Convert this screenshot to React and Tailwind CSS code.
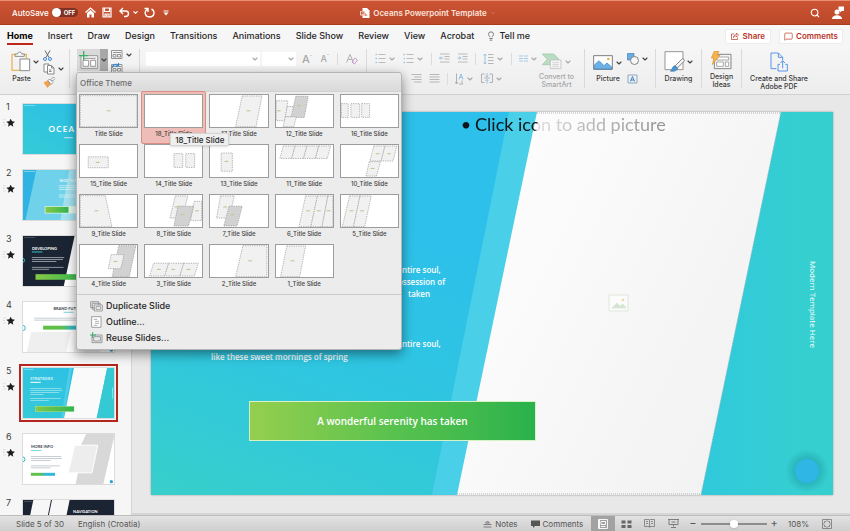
import React from 'react';
import { ChevronDown, Search, Lightbulb, MessageSquare } from 'lucide-react';

const TABS = ['Home', 'Insert', 'Draw', 'Design', 'Transitions', 'Animations', 'Slide Show', 'Review', 'View', 'Acrobat'];

// each shape is [points, fill]
const LIGHT = '#f1f1f1';
const DARK = '#d2d2d2';

const LAYOUTS = [
  { name: 'Title Slide', shapes: [['1,2 173,2 173,99 1,99', LIGHT]], marks: [[87, 50]] },
  { name: '18_Title Slide', shapes: [], marks: [], selected: true },
  { name: '17_Title Slide', shapes: [['98,3 158,3 140,99 78,99', LIGHT]], marks: [[117, 50]] },
  {
    name: '12_Title Slide',
    shapes: [['1,18 36,18 28,80 1,80', LIGHT], ['34,36 58,36 50,68 28,68', LIGHT], ['60,4 98,4 86,70 46,70', DARK], ['28,68 62,68 54,99 22,99', LIGHT]],
    marks: [[8, 50], [70, 34]],
  },
  { name: '16_Title Slide', shapes: [['1,27 22,27 22,70 1,70', LIGHT], ['30,27 57,27 57,70 30,70', LIGHT], ['63,27 87,27 87,70 63,70', LIGHT]], marks: [] },
  { name: '15_Title Slide', shapes: [['25,37 86,37 86,71 25,71', LIGHT]], marks: [[54, 55]] },
  { name: '14_Title Slide', shapes: [['88,27 115,27 115,70 88,70', LIGHT], ['124,27 151,27 151,70 124,70', LIGHT]], marks: [] },
  { name: '13_Title Slide', shapes: [['34,25 68,25 68,82 34,82', LIGHT]], marks: [[50, 52]] },
  {
    name: '11_Title Slide',
    shapes: [['22,3 58,3 48,42 12,42', LIGHT], ['58,3 94,3 84,42 48,42', LIGHT], ['94,3 130,3 120,42 84,42', LIGHT], ['130,3 166,3 156,42 120,42', LIGHT]],
    marks: [],
  },
  {
    name: '10_Title Slide',
    shapes: [['100,3 134,3 122,50 88,50', LIGHT], ['134,3 170,3 158,50 122,50', LIGHT], ['86,52 120,52 108,97 76,97', LIGHT]],
    marks: [[112, 28], [146, 28], [96, 74]],
  },
  { name: '9_Title Slide', shapes: [['1,2 77,2 97,99 1,99', LIGHT]], marks: [[50, 50]] },
  {
    name: '8_Title Slide',
    shapes: [['92,3 130,3 114,72 76,72', LIGHT], ['150,20 172,20 172,80 138,80', LIGHT], ['100,35 148,35 132,97 88,97', DARK]],
    marks: [[96, 38], [158, 50], [114, 62]],
  },
  {
    name: '7_Title Slide',
    shapes: [['32,3 74,3 58,72 20,72', LIGHT], ['58,35 98,35 82,97 42,97', DARK]],
    marks: [[46, 38], [68, 62]],
  },
  {
    name: '6_Title Slide',
    shapes: [['90,3 126,3 106,99 70,99', LIGHT], ['126,3 158,3 140,99 106,99', LIGHT], ['158,3 173,3 173,99 140,99', LIGHT]],
    marks: [[98, 50], [130, 50], [160, 50]],
  },
  { name: '5_Title Slide', shapes: [['26,3 58,3 38,99 4,99', LIGHT], ['58,3 92,3 72,99 38,99', LIGHT]], marks: [[32, 50], [64, 50]] },
  { name: '4_Title Slide', shapes: [['118,2 170,2 150,99 98,99', DARK], ['95,30 134,30 124,74 86,74', LIGHT]], marks: [[108, 52]] },
  {
    name: '3_Title Slide',
    shapes: [['26,57 72,57 60,97 14,97', LIGHT], ['72,57 118,57 106,97 60,97', LIGHT], ['118,57 162,57 150,97 106,97', LIGHT]],
    marks: [[42, 77], [86, 77], [132, 77]],
  },
  { name: '2_Title Slide', shapes: [['100,2 173,2 173,99 78,99', LIGHT]], marks: [[122, 50]] },
  { name: '1_Title Slide', shapes: [['33,3 90,3 72,99 14,99', LIGHT]], marks: [[50, 50]] },
];

const Caret = ({ faded }) => (
  <ChevronDown size={8} strokeWidth={3.5} className={faded ? 'text-[#a9a9a9] shrink-0' : 'text-[#444] shrink-0'} />
);

const Divider = () => <span className="w-px h-3 bg-[#dcdcdc] shrink-0" />;

/* ---------- Title bar ---------- */

const TitleBar = () => (
  <div className="h-[25px] shrink-0 flex items-center bg-linear-to-b from-[#cb5433] to-[#bb482a] border-t border-[#ea8d72] border-b border-b-[#a83c21] text-white px-[6px]">
    <div className="flex-1 flex items-center pl-[6px]">
      <label className="flex items-center gap-[3px] text-[8px] font-medium">
        AutoSave
        <input type="checkbox" role="switch" className="sr-only" />
        <span className="w-[26px] h-[9px] rounded-full bg-[#7e3221] flex items-center gap-[3px]">
          <span className="size-[9px] rounded-full bg-white" />
          <span className="text-[6px] leading-none font-bold">OFF</span>
        </span>
      </label>
      <button aria-label="Home" className="ml-[7px]">
        <svg width="11" height="11" viewBox="0 0 22 22" fill="none" stroke="white" strokeWidth="2.6">
          <path d="M1 11 11 2l10 9" />
          <path d="M4 12 11 6l7 6v9h-5v-6H9v6H4z" fill="white" stroke="none" />
        </svg>
      </button>
      <button aria-label="Save" className="ml-[6px]">
        <svg width="10" height="11" viewBox="0 0 20 22" fill="none" stroke="white" strokeWidth="2.4">
          <path d="M2 2h16v18H2zM5 2v7h10V2M6 20v-6h8v6" />
          <path d="M8 15h3v4H8z" fill="white" stroke="none" />
        </svg>
      </button>
      <button aria-label="Undo" className="ml-[7px]">
        <svg width="11" height="11" viewBox="0 0 22 22" fill="none" stroke="white" strokeWidth="2.8">
          <path d="M8 2 2 8l6 6M2 8h11c8 0 8 11 0 11h-3" />
        </svg>
      </button>
      <ChevronDown size={7} strokeWidth={4} className="ml-[2px]" />
      <button aria-label="Redo" className="ml-[5px]">
        <svg width="11" height="11" viewBox="0 0 22 22" fill="none" stroke="white" strokeWidth="2.8">
          <path d="M1 3h7v7M7 4C-1 9 2 20 11 20c10 0 12-12 4-16" />
        </svg>
      </button>
      <button aria-label="Customize toolbar" className="ml-[8px]">
        <svg width="6" height="6" viewBox="0 0 12 12" fill="white">
          <path d="M1 1h10v2H1zM1 5h10l-5 6z" />
        </svg>
      </button>
    </div>
    <div className="flex items-center gap-[3px] text-[8px] font-semibold text-[#fbe4dc]">
      <svg width="10" height="10" viewBox="0 0 20 20">
        <path d="M5 0h9l5 5v15H5z" fill="#fff" />
        <path d="M0 6h10v9H0z" fill="#f6c9bb" />
        <path d="M3 13V8h2c3 0 3 3 0 3H4" fill="none" stroke="#c0492b" strokeWidth="1.6" />
        <path d="M12 10a3 3 0 1 0 3 3h-3z" fill="#e38d74" />
      </svg>
      <h1>Oceans Powerpoint Template</h1>
      <ChevronDown size={6} className="text-[#e59c86]" />
    </div>
    <div className="flex-1 flex items-center justify-end gap-3">
      <button aria-label="Search"><Search size={10} strokeWidth={2.6} /></button>
      <button aria-label="Account">
        <svg width="12" height="13" viewBox="0 0 24 26" fill="white">
          <path d="M13 1h11v9h-5l-3 3v-3h-3z" />
          <circle cx="10" cy="12" r="5" />
          <path d="M0 26c0-10 20-10 20 0z" />
        </svg>
      </button>
    </div>
  </div>
);

/* ---------- Tabs ---------- */

const TabBar = () => (
  <nav className="h-[22px] shrink-0 flex items-center bg-[#f6f6f6] text-[9px] font-medium text-[#262626] pl-[7px] pr-[7px]">
    <div className="flex gap-[15px] flex-1 items-center">
      {TABS.map((tab) => (
        <button
          key={tab}
          className={tab === 'Home' ? 'font-bold text-black border-b-2 border-[#c0281c] leading-[14px] pt-[2px] whitespace-nowrap' : 'leading-[14px] whitespace-nowrap'}
        >
          {tab}
        </button>
      ))}
      <button className="flex items-center gap-[3px] -ml-[3px] whitespace-nowrap">
        <Lightbulb size={10} strokeWidth={1.8} className="text-[#555]" />
        Tell me
      </button>
    </div>
    <div className="flex gap-2 text-[8px] text-[#b8361f] font-semibold">
      <button className="flex items-center gap-1 h-[15px] px-[5px] bg-white rounded-[2px] border border-[#ececec]">
        <svg width="8" height="8" viewBox="0 0 16 16" fill="none" stroke="currentColor" strokeWidth="1.4">
          <path d="M6 4H1v11h12v-4M5 11c0-4 3-6 6-6V2l4 4-4 4V8c-3 0-5 1-6 3z" />
        </svg>
        Share
      </button>
      <button className="flex items-center gap-[3px] h-[15px] px-1 bg-white rounded-[2px] border border-[#ececec]">
        <MessageSquare size={9} strokeWidth={1.8} />
        Comments
      </button>
    </div>
  </nav>
);

/* ---------- Ribbon icons ---------- */

const PasteIcon = () => (
  <svg width="20" height="21" viewBox="0 0 60 63" fill="none" strokeWidth="3">
    <path d="M14 10H3v48h24M36 10h10v12" stroke="#e9b95c" strokeWidth="4" />
    <path d="M12 16V9h8c0-8 12-8 12 0h8v7z" fill="#fff" stroke="#8b8b8b" />
    <path d="M27 24h29v35H27z" fill="#fff" stroke="#8b8b8b" />
  </svg>
);

const CutIcon = () => (
  <svg width="9" height="11" viewBox="0 0 18 22" fill="none" strokeWidth="2">
    <path d="M4 1l8 14M14 1 6 15" stroke="#666" />
    <circle cx="4" cy="18" r="3" stroke="#3c8ad0" />
    <circle cx="14" cy="18" r="3" stroke="#3c8ad0" />
  </svg>
);

const CopyIcon = () => (
  <svg width="12" height="12" viewBox="0 0 24 24" fill="#fff" stroke="#7a7a7a" strokeWidth="1.8">
    <path d="M9 18H2V2h10v3" />
    <path d="M9 5h8l5 5v12H9zM17 5v5h5M12 14h5M12 17h5" />
  </svg>
);

const BrushIcon = () => (
  <svg width="12" height="11" viewBox="0 0 24 22">
    <path d="M1 11l9-4 6 7-7 8z" fill="#f0a050" />
    <path d="M10 7l3-3 7 7-4 4zM16 5l5-5 3 3-5 5z" fill="#fff" stroke="#777" strokeWidth="1.5" />
  </svg>
);

const NewSlideIcon = () => (
  <svg width="20" height="19" viewBox="0 0 60 57" fill="none" stroke="#979797" strokeWidth="3">
    <path d="M6 14h50v38H6z" fill="#f4f4f4" />
    <path d="M12 22h38M12 28h17v18H12zM35 28h15v18H35z" fill="#fff" />
    <path d="M14 0v28M0 14h28" stroke="#3fae68" strokeWidth="4" />
  </svg>
);

const LayoutIcon = ({ reset }) => (
  <svg width="12" height="11" viewBox="0 0 24 22" fill="none" stroke="#8a8a8a" strokeWidth="1.8">
    <path d="M1 3h21v16H1zM4 7h16M4 11h6v5H4zM13 11h6v5h-6z" />
    {reset && <path d="M2 10C3 3 10 1 15 5M15 0v6H9" stroke="#3c8ad0" strokeWidth="2.4" />}
  </svg>
);

const ListIcon = () => (
  <svg width="11" height="11" viewBox="0 0 22 22" fill="none" stroke="#b4b4b4" strokeWidth="1.8">
    <path d="M7 3h14M7 11h14M7 19h14" />
    <path d="M1 3h3M1 11h3M1 19h3" stroke="#9fc6e6" strokeWidth="3" />
  </svg>
);

const IndentIcon = ({ flip }) => (
  <svg width="11" height="11" viewBox="0 0 22 22" fill="none" stroke="#b4b4b4" strokeWidth="1.8">
    <path d="M2 2h19M11 7h10M11 12h10M2 18h19" />
    <path d={flip ? 'M1 10h7M5 7l3 3-3 3' : 'M9 10H1M4 7l-3 3 3 3'} stroke="#8fbce0" />
  </svg>
);

const AlignIcon = ({ full }) => (
  <svg width="11" height="11" viewBox="0 0 22 22" fill="none" stroke="#b0b0b0" strokeWidth="1.8">
    <path d={full ? 'M1 3h20M1 8h20M1 13h20M1 18h20' : 'M1 3h20M6 8h15M1 13h20M6 18h15'} />
  </svg>
);

const SpacingIcon = () => (
  <svg width="11" height="12" viewBox="0 0 22 24" fill="none" stroke="#b0b0b0" strokeWidth="1.8">
    <path d="M10 3h11M10 9h11M10 15h11M10 21h11" />
    <path d="M4 2v20M1 5l3-3 3 3M1 19l3 3 3-3" stroke="#8fbce0" />
  </svg>
);

const ColumnsIcon = () => (
  <svg width="9" height="8" viewBox="0 0 18 16" stroke="#9fc6e6" strokeWidth="1.8">
    <path d="M0 2h8M0 7h8M0 12h8M10 2h8M10 7h8M10 12h8" />
  </svg>
);

const TextDirIcon = () => (
  <svg width="9" height="12" viewBox="0 0 18 24" fill="none" stroke="#a9a9a9" strokeWidth="1.8">
    <path d="M3 1v21M0 18l3 4 3-4" />
    <path d="M8 13l4-11 4 11M9 9h6" stroke="#8fbce0" />
    <path d="M14 15v7M8 22h8" />
  </svg>
);

const AlignTextIcon = () => (
  <svg width="12" height="11" viewBox="0 0 24 22" fill="none" stroke="#a9a9a9" strokeWidth="1.8">
    <path d="M7 2H1v17h6M17 2h6v17h-6M6 10h12" />
    <path d="M12 0v7M12 13v8M9 5l3 3 3-3M9 16l3-3 3 3" stroke="#8fbce0" />
  </svg>
);

const SmartArtIcon = () => (
  <svg width="20" height="17" viewBox="0 0 60 51" strokeWidth="2.4">
    <path d="M1 3h34l16 16-16 16H1l15-16z" fill="#b9dcc2" stroke="#9ccba8" />
    <path d="M25 21h32v26H25z" fill="#f6f6f6" stroke="#bcbcbc" />
    <path d="M31 29h20M31 35h20M31 41h20" stroke="#c9c9c9" />
  </svg>
);

const PictureIcon = () => (
  <svg width="20" height="15" viewBox="0 0 60 45">
    <path d="M2 2h56v41H2z" fill="#fff" stroke="#7d7d7d" strokeWidth="3" />
    <path d="M4 30l14-13 15 15 9-8 14 12v6H4z" fill="#6cb0e6" stroke="#3680bd" strokeWidth="2" />
    <circle cx="46" cy="12" r="4" fill="#efad45" />
  </svg>
);

const ShapesIcon = () => (
  <svg width="12" height="12" viewBox="0 0 24 24">
    <path d="M1 1h13v13H1z" fill="#6aabe0" stroke="#3f83c0" strokeWidth="1.4" />
    <circle cx="15" cy="15" r="8" fill="#f6f6f6" stroke="#777" strokeWidth="1.8" />
  </svg>
);

const TextBoxIcon = () => (
  <svg width="11" height="10" viewBox="0 0 22 20" fill="none" stroke="#3f83c0">
    <path d="M2 2h18v16H2z" stroke="#8aa9c4" strokeWidth="2" />
    <path d="M7 15l4-10 4 10M8 12h6" strokeWidth="2" />
  </svg>
);

const DrawingIcon = () => (
  <svg width="21" height="21" viewBox="0 0 63 63">
    <path d="M3 2h54v54H3z" fill="#fff" stroke="#858585" strokeWidth="2.6" />
    <path d="M58 24c4 2 4 5 1 8L40 51l-7-6 19-19c2-2 4-3 6-2z" fill="#f4f4f4" stroke="#666" strokeWidth="2.4" />
    <path d="M32 44l9 8c-3 9-14 10-22 8 7-3 5-14 13-16z" fill="#4a97d6" stroke="#2d70a8" strokeWidth="2" />
  </svg>
);

const DesignIcon = () => (
  <svg width="21" height="19" viewBox="0 0 63 57">
    <path d="M10 10h50v43H10z" fill="#f6f6f6" stroke="#858585" strokeWidth="3" />
    <path d="M17 18h36v9H17zM17 33h20v13H17zM43 33h10v13H43z" fill="#fff" stroke="#9b9b9b" strokeWidth="2.6" />
    <path d="M10 0h14l-6 13h9L4 41l5-20H1z" fill="#f5b453" stroke="#e08f27" strokeWidth="2" />
  </svg>
);

const AdobeIcon = () => (
  <svg width="18" height="20" viewBox="0 0 54 60" fill="none" stroke="#5a95e8" strokeWidth="3">
    <path d="M19 50H3V3h22l13 13v9M25 3v13h13" />
    <path d="M30 37h-6v20h28V37h-6M38 49V27M31 33l7-7 7 7" />
  </svg>
);

/* ---------- Layout gallery ---------- */

const LayoutThumb = ({ shapes, marks }) => (
  <svg viewBox="0 0 174 100" preserveAspectRatio="none" className="w-full h-[34px] bg-white border border-[#9c9c9c]">
    {shapes.map(([points, fill]) => (
      <polygon key={points} points={points} fill={fill} stroke="#8f8f8f" strokeWidth="2" strokeDasharray="4 3" />
    ))}
    {marks.map(([x, y]) => (
      <g key={`${x}-${y}`}>
        <rect x={x - 6} y={y - 2} width="12" height="3" fill="#b5cba2" />
        <rect x={x - 2} y={y - 3} width="4" height="2" fill="#e4c06a" />
      </g>
    ))}
  </svg>
);

const LayoutMenu = () => (
  <div className="absolute left-[-1px] top-[23px] z-20 w-[326px] bg-[#ececec] border border-[#b5b5b5] rounded-[3px] shadow-[0_4px_12px_rgba(0,0,0,0.45)] text-[#262626]">
    <h2 className="h-[19px] px-[3px] text-[8px] leading-[20px] text-[#6b6b6b] bg-linear-to-b from-[#e9e9e9] to-[#dadada] border-b border-[#d2d2d2] rounded-t-[3px]">
      Office Theme
    </h2>
    <div className="grid grid-cols-5 gap-x-[6px] px-[2px] pt-[2px]">
      {LAYOUTS.map(({ name, shapes, marks, selected }) => (
        <button key={name} className="relative h-[50px] flex flex-col items-stretch justify-start text-center">
          {selected && <span className="absolute -inset-x-[3px] -top-[3px] bottom-0 bg-[#eebdb7] border border-[#d98d84] rounded-[2px]" />}
          <span className="relative block">
            <LayoutThumb shapes={shapes} marks={marks} />
            <span className="block mt-[2px] text-[6px] leading-[8px] font-medium text-[#3c3c3c] whitespace-nowrap">{name}</span>
          </span>
          {selected && (
            <span role="tooltip" className="absolute z-10 left-[26px] top-[39px] h-[13px] px-1 text-[8px] leading-[12px] whitespace-nowrap bg-[#efefef] border border-[#d5d5d5] shadow-sm">
              18_Title Slide
            </span>
          )}
        </button>
      ))}
    </div>
    <ul className="border-t border-[#c9c9c9] pt-[3px] pb-[3px] text-[9px] leading-[16px]">
      <li>
        <button className="flex items-center gap-[3px] pl-[13px]">
          <svg width="13" height="11" viewBox="0 0 39 33" fill="#e3e3e3" stroke="#8a8a8a" strokeWidth="2.4">
            <path d="M2 2h24v18H2zM7 7h24v18H7z" />
            <path d="M13 12h24v18H13zM18 17h14v8H18z" fill="#f6f6f6" />
          </svg>
          Duplicate Slide
        </button>
      </li>
      <li>
        <button className="flex items-center gap-[3px] pl-[13px]">
          <svg width="13" height="12" viewBox="0 0 39 36" fill="#fff" stroke="#8a8a8a" strokeWidth="2.4">
            <path d="M5 2h28v32H5z" />
            <path d="M11 10h11M15 16h12M15 22h12M11 28h11" strokeWidth="2" />
          </svg>
          Outline...
        </button>
      </li>
      <li>
        <button className="flex items-center gap-[3px] pl-[13px]">
          <svg width="13" height="12" viewBox="0 0 39 36" fill="#e8e8e8" stroke="#8a8a8a" strokeWidth="2.4">
            <path d="M6 9h30v23H6zM11 14h20v13H11z" />
            <path d="M8 0v18M0 9h18" stroke="#3fae68" strokeWidth="3" />
          </svg>
          Reuse Slides...
        </button>
      </li>
    </ul>
  </div>
);

/* ---------- Ribbon ---------- */

const Group = ({ className, children }) => (
  <div className={`relative h-[39px] shrink-0 border-r border-[#dadada] ${className}`}>{children}</div>
);

const Ribbon = () => (
  <div className="relative z-10 h-[48px] shrink-0 flex bg-linear-to-b from-[#f6f6f6] to-[#ededed] border-b border-[#d0d0d0] pt-[2px] text-[7px] leading-[8px] font-medium text-[#3a3a3a]">
    <Group className="w-[70px] flex pl-[11px] gap-[7px]">
      <div className="flex flex-col items-center pt-[2px] gap-[3px]">
        <div className="flex items-center gap-[1px] -mr-[8px]">
          <PasteIcon />
          <Caret />
        </div>
        Paste
      </div>
      <div className="flex flex-col gap-[2px] pt-px pl-[4px]">
        <CutIcon />
        <div className="flex items-center gap-[2px]">
          <CopyIcon />
          <Caret />
        </div>
        <BrushIcon />
      </div>
    </Group>

    <Group className="w-[70px] flex pl-[7px]">
      <div className="relative h-[22px] flex">
        <button aria-label="New Slide" className="w-[23px] bg-[#d9d9d9] flex items-center justify-center"><NewSlideIcon /></button>
        <button aria-label="Slide layouts" className="w-[8px] bg-[#a8a8a8] flex items-center justify-center"><Caret /></button>
        <LayoutMenu />
      </div>
      <div className="flex flex-col gap-[3px] pl-[3px]">
        <div className="flex items-center gap-[2px]">
          <LayoutIcon />
          <Caret />
        </div>
        <LayoutIcon reset />
      </div>
    </Group>

    <Group className="w-[227px] flex items-start pl-[6px] gap-[2px]">
      <div className="relative mt-[3px]">
        <select aria-label="Font" className="appearance-none block w-[114px] h-[14px] bg-white" />
        <span className="absolute right-[1px] top-[3px] pointer-events-none"><Caret faded /></span>
      </div>
      <div className="relative mt-[3px]">
        <select aria-label="Font size" className="appearance-none block w-[34px] h-[14px] bg-white" />
        <span className="absolute right-[1px] top-[3px] pointer-events-none"><Caret faded /></span>
      </div>
      <div className="flex items-center h-[20px] pl-1 gap-[8px] text-[#a8a8a8]">
        <button className="text-[11px]">A<sup className="text-[6px]">ˆ</sup></button>
        <button className="text-[9px]">A<sup className="text-[6px]">ˇ</sup></button>
        <Divider />
        <button aria-label="Clear formatting">
          <svg width="12" height="12" viewBox="0 0 24 24" fill="none" stroke="#b0b0b0" strokeWidth="2">
            <path d="M1 19 8 3l7 16M4 13h8" />
            <path d="M12 18l6-8 5 4-6 8z" stroke="#c79bd3" />
          </svg>
        </button>
      </div>
    </Group>

    <Group className="w-[218px] flex pl-2">
      <div className="flex flex-col gap-[1px]">
        <div className="flex items-center h-[20px] gap-[5px] w-[163px] justify-between">
          <span className="flex items-center gap-[2px]"><ListIcon /><Caret faded /></span>
          <span className="flex items-center gap-[2px]"><ListIcon /><Caret faded /></span>
          <Divider />
          <IndentIcon />
          <IndentIcon flip />
          <Divider />
          <span className="flex items-center gap-[2px]"><SpacingIcon /><Caret faded /></span>
          <Divider />
          <span className="flex items-center gap-[2px]"><ColumnsIcon /><Caret faded /></span>
        </div>
        <div className="flex items-center h-[20px] gap-[7px] pl-[36px]">
          <AlignIcon />
          <AlignIcon full />
          <Divider />
          <span className="flex items-center gap-[2px]"><TextDirIcon /><Caret faded /></span>
          <span className="flex items-center gap-[2px]"><AlignTextIcon /><Caret faded /></span>
        </div>
      </div>
      <div className="flex flex-col items-center pt-1 gap-[3px] text-[#a6a6a6] text-center pl-px">
        <div className="flex items-center gap-[2px] h-[19px]">
          <SmartArtIcon />
          <Caret faded />
        </div>
        <span className="whitespace-nowrap">Convert to<br />SmartArt</span>
      </div>
    </Group>

    <Group className="w-[71px] flex pl-2 gap-1">
      <div className="flex flex-col items-center pt-1 gap-[3px]">
        <div className="flex items-center gap-[2px] h-[19px]">
          <PictureIcon />
          <Caret />
        </div>
        Picture
      </div>
      <div className="flex flex-col gap-[9px] pt-1">
        <div className="flex items-center gap-[2px]">
          <ShapesIcon />
          <Caret />
        </div>
        <TextBoxIcon />
      </div>
    </Group>

    <Group className="w-[46px] flex flex-col items-center pt-[2px] gap-[3px]">
      <div className="flex items-center gap-[1px]">
        <DrawingIcon />
        <Caret />
      </div>
      Drawing
    </Group>

    <Group className="w-[40px] flex flex-col items-center pt-[2px] gap-[3px] text-center">
      <div className="h-[21px]"><DesignIcon /></div>
      <span>Design<br />Ideas</span>
    </Group>

    <div className="flex flex-col items-center pt-[3px] gap-[3px] text-center pl-2">
      <AdobeIcon />
      <span className="whitespace-nowrap">Create and Share<br />Adobe PDF</span>
    </div>
  </div>
);

/* ---------- Slide thumbnails (drawn on a 282x158 board) ---------- */

const Lines = ({ x, y, color, widths }) => (
  <g fill={color}>
    {widths.map((w, i) => <rect key={i} x={x} y={y + i * 6} width={w} height="2" />)}
  </g>
);

const ThumbDefs = () => (
  <defs>
    <linearGradient id="ocean" x1="0" y1="1" x2="1" y2="0">
      <stop offset="0" stopColor="#35cbd6" />
      <stop offset="1" stopColor="#2cbcea" />
    </linearGradient>
    <linearGradient id="leaf" x1="0" x2="1">
      <stop offset="0" stopColor="#86c946" />
      <stop offset="1" stopColor="#2fb650" />
    </linearGradient>
    <linearGradient id="leafSea" x1="0" x2="1">
      <stop offset="0.35" stopColor="#62bf47" />
      <stop offset="0.65" stopColor="#2fb9dc" />
    </linearGradient>
  </defs>
);

const THUMBS = [
  <>
    <rect width="282" height="158" fill="url(#ocean)" />
    <Lines x={6} y={7} color="#9fe0ee" widths={[34]} />
    <text x="141" y="88" textAnchor="middle" fontSize="24" fontWeight="700" fill="#fff" letterSpacing="4">OCEANS</text>
    <rect x="128" y="104" width="26" height="3" fill="#c9f0f6" />
  </>,
  <>
    <rect width="282" height="158" fill="#2fb3e4" />
    <path d="M44 0h238v158H10z" fill="#6fd2ea" />
    <path d="M144 0h138v158H116z" fill="#a3e3f1" />
    <Lines x={6} y={6} color="#9fe0ee" widths={[34]} />
    <text x="114" y="38" fontSize="11" fontWeight="700" fill="#e8f9fc">NICE TO MEET</text>
    <Lines x={112} y={50} color="#e0f6fa" widths={[80, 70, 90]} />
    <Lines x={112} y={78} color="#e0f6fa" widths={[80, 60]} />
    <rect x="69" y="113" width="130" height="22" fill="#e8f7ee" />
    <rect x="71" y="115" width="70" height="18" fill="url(#leaf)" />
  </>,
  <>
    <rect width="282" height="158" fill="#fff" />
    <path d="M0 0h160l-34 158H0z" fill="#1b2433" />
    <Lines x={6} y={7} color="#5c6675" widths={[34]} />
    <circle cx="2" cy="77" r="6" fill="none" stroke="#2fb9cc" strokeWidth="3" />
    <text x="30" y="46" fontSize="12" fontWeight="700" fill="#fff">DEVELOPING</text>
    <rect x="30" y="50" width="32" height="3" fill="#36c2cf" />
    <Lines x={30} y={68} color="#c8ccd2" widths={[98, 94, 74]} />
    <Lines x={30} y={97} color="#c8ccd2" widths={[96, 52]} />
    <rect x="41" y="119" width="150" height="17" fill="url(#leaf)" />
  </>,
  <>
    <rect width="282" height="158" fill="#fff" />
    <path d="M28 94h120l-14 64H14zM170 94h80l-14 64h-80z" fill="#efefef" />
    <text x="141" y="26" textAnchor="middle" fontSize="12" fontWeight="700" fill="#3c4450">BRAND FUTURE</text>
    <rect x="126" y="33" width="30" height="2" fill="#36c2cf" />
    <Lines x={37} y={51} color="#aab3bb" widths={[208, 170]} />
    <rect x="64" y="75" width="150" height="12" fill="url(#leafSea)" />
    <circle cx="2" cy="82" r="8" fill="none" stroke="#2fb9cc" strokeWidth="3" />
    <circle cx="271" cy="149" r="5" fill="#2fa5cc" />
  </>,
  <>
    <rect width="282" height="158" fill="url(#ocean)" />
    <path d="M152 0h-8l-26 158h8z" fill="#4dcde8" />
    <path d="M158 0h101l-33 158H127z" fill="#fafafa" />
    <path d="M259 0h23v158h-56z" fill="#35c9d4" />
    <Lines x={6} y={6} color="#9fe0ee" widths={[30]} />
    <text x="25" y="40" fontSize="12" fontWeight="700" fill="#d9f4fb">STRATEGIES</text>
    <rect x="25" y="45" width="32" height="3" fill="#fff" />
    <Lines x={25} y={65} color="#b5e9f6" widths={[94, 98, 88, 40]} />
    <Lines x={25} y={95} color="#b5e9f6" widths={[92, 56]} />
    <rect x="40" y="119" width="118" height="17" fill="url(#leaf)" stroke="#d8f0c0" />
    <rect x="274" y="62" width="2" height="34" fill="#b5edf0" />
  </>,
  <>
    <rect width="282" height="158" fill="#fff" />
    <path d="M196 0h86l-36 158h-84l8-38-30 0z" fill="#d8d8d8" />
    <path d="M160 37h70l-18 84h-72z" fill="#ededed" stroke="#fff" strokeWidth="3" />
    <text x="27" y="46" fontSize="12" fontWeight="700" fill="#3c4450">MORE INFO</text>
    <rect x="27" y="52" width="32" height="2" fill="#36c2cf" />
    <Lines x={27} y={70} color="#aab3bb" widths={[92, 94, 60]} />
    <Lines x={27} y={99} color="#aab3bb" widths={[88, 60]} />
    <rect x="27" y="121" width="73" height="9" fill="url(#leafSea)" />
    <circle cx="1" cy="80" r="8" fill="none" stroke="#2fb9cc" strokeWidth="3" />
    <circle cx="271" cy="148" r="5" fill="#2fa5cc" />
  </>,
  <>
    <rect width="282" height="158" fill="#1b2433" />
    <path d="M35 0h110l-32 158H2z" fill="#f7f7f7" />
    <path d="M90 0 58 158" stroke="#1b2433" strokeWidth="3" />
    <Lines x={6} y={7} color="#5c6675" widths={[26]} />
    <text x="155" y="44" fontSize="12" fontWeight="700" fill="#fff">NAVIGATION</text>
  </>,
];

const Sidebar = () => (
  <aside className="w-[132px] shrink-0 bg-[#f6f6f6] border-r border-[#d4d4d4] overflow-hidden pt-[7px]">
    <svg width="0" height="0" className="absolute"><ThumbDefs /></svg>
    {THUMBS.map((art, i) => (
      <div key={i} className="flex h-[66px]">
        <div className="w-[19px] shrink-0 pl-[3px] text-[9px] leading-[10px] text-[#3d3d3d]">
          <span className="block pl-[3px]">{i + 1}</span>
          <svg width="12" height="9" viewBox="0 0 36 27" className="mt-[6px]">
            <path d="M2 5h5M1 13h5M2 21h5" stroke="#9a9a9a" strokeWidth="2" strokeDasharray="2 2" />
            <path d="M23 2l4 8 9 1-7 6 2 9-8-5-8 5 2-9-7-6 9-1z" fill="#1d1d1d" />
          </svg>
        </div>
        <button
          aria-label={`Slide ${i + 1}`}
          className={i === 4 ? 'w-[99px] h-[58px] -mt-[2px] border-2 border-[#b3261e] p-px' : 'w-[99px] h-[58px] -mt-[2px] border-2 border-transparent p-px'}
        >
          <svg viewBox="0 0 282 158" preserveAspectRatio="none" className="block size-full font-['Lato',sans-serif] outline outline-[#dcdcdc] -outline-offset-1">
            {art}
          </svg>
        </button>
      </div>
    ))}
  </aside>
);

/* ---------- Slide canvas ---------- */

const SlideArt = () => (
  <svg viewBox="0 0 682 383" preserveAspectRatio="none" className="absolute inset-0 size-full">
    <defs>
      <linearGradient id="sea" x1="0" y1="1" x2="0.45" y2="0.35">
        <stop offset="0" stopColor="#38cfcb" />
        <stop offset="0.5" stopColor="#2fc6e0" />
        <stop offset="1" stopColor="#2dc0ea" />
      </linearGradient>
      <linearGradient id="teal" x1="0" x2="1">
        <stop offset="0" stopColor="#2fc9dc" />
        <stop offset="0.8" stopColor="#36cfd0" />
      </linearGradient>
      <linearGradient id="paper" x1="0" y1="0" x2="1" y2="0.6">
        <stop offset="0" stopColor="#ffffff" />
        <stop offset="1" stopColor="#f2f2f2" />
      </linearGradient>
      <radialGradient id="glow">
        <stop offset="0.5" stopColor="#1f9fa8" stopOpacity="0.6" />
        <stop offset="1" stopColor="#1f9fa8" stopOpacity="0" />
      </radialGradient>
    </defs>
    <rect width="682" height="383" fill="url(#sea)" />
    <path d="M358 0h40v383H281z" fill="#49cfe8" />
    <path d="M630 0h52v383H550z" fill="url(#teal)" />
    <path d="M386 0h244l-80 383H306z" fill="url(#paper)" />
    <path d="M630 0l-80 383" stroke="#8fb5b8" strokeDasharray="1 1" />
    <path d="M386 1h244M306 382h244" stroke="#a9b5b8" strokeDasharray="1 1" />
    <g fill="none" stroke="#dfe6dc">
      <path d="M458 183h19v16h-19z" fill="#fbfbfb" />
      <path d="M461 196l5-5 3 3 3-2 3 4z" fill="#d3e6cf" />
      <circle cx="472" cy="188" r="1" fill="#f2d7ae" stroke="#f2d7ae" />
    </g>
    <circle cx="656" cy="359" r="22" fill="url(#glow)" />
    <circle cx="656" cy="359" r="12" fill="#2fb6e4" />
  </svg>
);

const Slide = () => (
  <div className="relative w-full aspect-[682/383] shadow-[0_0_2px_rgba(0,0,0,0.35)] text-white font-['Open_Sans',sans-serif]">
    <SlideArt />
    <p className="absolute left-[45.4%] top-0 flex items-center gap-1 text-[18px] leading-[25px] font-['Lato',sans-serif] whitespace-nowrap text-transparent bg-clip-text bg-[linear-gradient(102deg,#0b1418_0,#0b1418_37%,#dcdcdc_38%,#bdbdbd_60%,#8f8f8f_100%)]">
      <span>•</span>
      <span>Click icon to add picture</span>
    </p>
    {/* centred columns, partly covered while the layout menu is open */}
    <div className="absolute left-[34.3%] top-[39.8%] w-[10%] text-center text-[8px] leading-[12px] font-semibold whitespace-nowrap">
      <p>entire soul,</p>
      <p>possession of</p>
      <p>taken</p>
    </div>
    <p className="absolute left-[34.3%] top-[59%] w-[10%] text-center text-[8px] leading-[12px] font-semibold whitespace-nowrap">entire soul,</p>
    <p className="absolute left-[8.8%] top-[62.3%] text-[8px] leading-[12px] font-semibold whitespace-nowrap">like these sweet mornings of spring</p>
    <div className="absolute left-[14.3%] top-[75.5%] w-[42.2%] h-[10.4%] flex items-center justify-center border border-[#d9f2c4] bg-linear-to-r from-[#94cf4e] via-[#58c24e] to-[#29b24c] text-[10px] font-semibold">
      A wonderful serenity has taken
    </div>
    <p className="absolute right-[2%] top-[39%] [writing-mode:vertical-rl] text-[8px] leading-[12px] whitespace-nowrap">Modern Template Here</p>
  </div>
);

/* ---------- Status bar ---------- */

const StatusBar = () => (
  <footer className="h-[16px] shrink-0 flex items-center bg-linear-to-b from-[#e2e2e2] to-[#cfcfcf] border-t border-[#bdbdbd] text-[8px] text-[#555] pl-4 pr-[18px] whitespace-nowrap">
    <span>Slide 5 of 30</span>
    <button className="ml-[14px]">English (Croatia)</button>
    <div className="flex-1" />
    <button className="flex items-center gap-[3px]">
      <svg width="9" height="8" viewBox="0 0 18 16" stroke="#666" strokeWidth="1.6" fill="none">
        <path d="M1 9h16M1 14h16M5 6l4-4 4 4z" />
      </svg>
      Notes
    </button>
    <button className="flex items-center gap-[3px] ml-[13px]">
      <svg width="9" height="8" viewBox="0 0 18 16" fill="#555"><path d="M0 1h18v11H8l-4 4v-4H0z" /></svg>
      Comments
    </button>
    <button aria-label="Normal view" className="ml-2 w-[24px] h-[15px] bg-[#a2a2a2] flex items-center justify-center">
      <svg width="10" height="10" viewBox="0 0 20 20" fill="none" stroke="#fff" strokeWidth="1.8">
        <path d="M1 1h18v18H1zM6 5h9v6H6zM6 15h9M3 1v18" />
      </svg>
    </button>
    <button aria-label="Slide sorter" className="ml-[6px]">
      <svg width="11" height="8" viewBox="0 0 22 16" fill="#666"><path d="M1 1h8v6H1zM13 1h8v6h-8zM1 10h8v6H1zM13 10h8v6h-8z" /></svg>
    </button>
    <button aria-label="Reading view" className="ml-3">
      <svg width="11" height="9" viewBox="0 0 22 18" fill="none" stroke="#777" strokeWidth="1.6"><path d="M1 1h9l1 2 1-2h9v14h-9l-1 2-1-2H1zM11 3v13M4 5h4M4 9h4M14 5h4M14 9h4" /></svg>
    </button>
    <button aria-label="Slide show" className="ml-[13px]">
      <svg width="11" height="9" viewBox="0 0 22 18" fill="none" stroke="#666" strokeWidth="1.6"><path d="M0 1h22M2 1v10h18V1M11 11v4M6 17h10M7 6h8" /></svg>
    </button>
    <button className="ml-[10px] text-[11px] leading-none">−</button>
    <input
      type="range"
      aria-label="Zoom"
      min="0"
      max="100"
      defaultValue="51"
      className="ml-1 w-[66px] h-[2px] appearance-none bg-[#8d8d8d] [&::-webkit-slider-thumb]:appearance-none [&::-webkit-slider-thumb]:size-[8px] [&::-webkit-slider-thumb]:rounded-full [&::-webkit-slider-thumb]:bg-white [&::-webkit-slider-thumb]:shadow"
    />
    <button className="ml-1 text-[11px] leading-none">+</button>
    <span className="ml-[10px]">108%</span>
    <button aria-label="Fit slide" className="ml-[13px]">
      <svg width="10" height="10" viewBox="0 0 20 20" fill="none" stroke="#777" strokeWidth="1.6"><path d="M1 1h18v18H1zM5 8V5h3M12 5h3v3M15 12v3h-3M8 15H5v-3M10 1v4M10 15v4M1 10h4M15 10h4" /></svg>
    </button>
  </footer>
);

const App = () => {
  return (
    <div className="h-screen flex flex-col overflow-hidden bg-[#e9e9e9] font-['Inter',sans-serif]">
      <TitleBar />
      <TabBar />
      <Ribbon />
      <div className="flex-1 min-h-0 flex">
        <Sidebar />
        <main className="flex-1 min-w-0 overflow-hidden bg-[#e8e8e8] border-b-2 border-[#d6d6d6] pl-[19px] pr-[17px] pt-[17px]">
          <Slide />
        </main>
      </div>
      <StatusBar />
    </div>
  );
};

export default App;
